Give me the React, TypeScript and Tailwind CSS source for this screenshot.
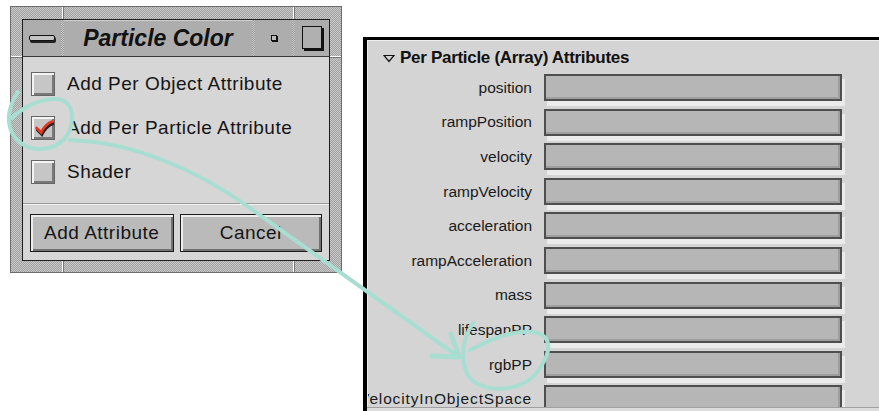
import React from "react";

const font = { fontFamily: '"Liberation Sans", Arial, sans-serif' };

const rows = [
  "position",
  "rampPosition",
  "velocity",
  "rampVelocity",
  "acceleration",
  "rampAcceleration",
  "mass",
  "lifespanPP",
  "rgbPP",
  "VelocityInObjectSpace",
];

function Dots({ className = "" }: { className?: string }) {
  return (
    <div
      className={
        "bg-[repeating-conic-gradient(#9c9c9c_0_25%,#c6c6c6_0_50%)] bg-[length:2px_2px] " +
        className
      }
    />
  );
}

function CheckBox({ checked }: { checked?: boolean }) {
  return (
    <div className="w-[24px] h-[24px] shrink-0 bg-[#c6c6c6] border border-[#666] shadow-[inset_2px_2px_0_#f4f4f4,inset_-2px_-2px_0_#7a7a7a] relative">
      {checked && (
        <svg viewBox="0 0 24 24" className="absolute inset-0 w-full h-full">
          <path d="M5 13 L10 18 C13 12 17 8 22 6" fill="none" stroke="#222" strokeWidth="3" strokeLinecap="round" transform="translate(0.8 1.2)" />
          <path d="M5 12 L10 17 C13 11 17 7 22 5" fill="none" stroke="#e5361f" strokeWidth="3" strokeLinecap="round" />
        </svg>
      )}
    </div>
  );
}

function WinButton({ children, w }: { children: React.ReactNode; w: string }) {
  return (
    <div
      className={
        "h-[38px] flex items-center justify-center border border-[#1c1c1c] bg-[#bababa] shadow-[inset_2px_2px_0_#ececec,inset_-2px_-2px_0_#727272] text-[19px] tracking-[0.5px] text-[#151515] " +
        w
      }
    >
      {children}
    </div>
  );
}

function ParticleWindow() {
  return (
    <div className="ml-[10px] mt-[6px] w-[332px] h-[267px] shrink-0 relative border border-[#6c6c6c] bg-[repeating-conic-gradient(#a2a2a2_0_25%,#c8c8c8_0_50%)] bg-[length:2px_2px] pt-[12px] px-[11px] pb-[11px]">
      {/* frame notches */}
      <div className="absolute top-0 left-[51px] w-[2px] h-[12px] border-l border-white border-r border-r-[#777]" />
      <div className="absolute top-0 left-[282px] w-[2px] h-[12px] border-l border-white border-r border-r-[#777]" />
      <div className="absolute bottom-0 left-[51px] w-[2px] h-[11px] border-l border-white border-r border-r-[#777]" />
      <div className="absolute bottom-0 left-[282px] w-[2px] h-[11px] border-l border-white border-r border-r-[#777]" />
      <div className="absolute left-0 top-[49px] h-[2px] w-[11px] border-t border-white border-b border-b-[#777]" />
      <div className="absolute right-0 top-[49px] h-[2px] w-[11px] border-t border-white border-b border-b-[#777]" />

      <div className="w-full h-full border border-[#1e1e1e] flex flex-col bg-[#d6d6d6]">
        {/* title bar */}
        <div className="h-[37px] flex shrink-0 border-b border-[#3a3a3a] bg-[#adadad]">
          <div className="w-[38px] flex items-center justify-center">
            <div className="w-[26px] h-[6px] bg-[#c4c4c4] border border-[#111] rounded-[2px] shadow-[1px_2px_0_#222]" />
          </div>
          <Dots className="w-[3px]" />
          <div className="w-[188px] flex items-center justify-center italic font-bold text-[23px] text-[#111] border-t border-[#d0d0d0]">
            Particle Color
          </div>
          <Dots className="w-[3px]" />
          <div className="w-[37px] flex items-center justify-center">
            <div className="w-[6px] h-[6px] bg-[#bdbdbd] border border-[#111] shadow-[1px_1px_0_#111]" />
          </div>
          <Dots className="w-[3px]" />
          <div className="flex-1 flex items-center justify-center">
            <div className="w-[20px] h-[23px] bg-[#b0b0b0] border border-[#111] shadow-[2px_2px_0_#111] -mt-[1px]" />
          </div>
        </div>

        {/* content */}
        <div className="flex flex-col px-[8px] pt-[5px] text-[19px] tracking-[0.5px] text-[#151515]">
          <div className="h-[44px] flex items-center gap-[12px]">
            <CheckBox />
            <span>Add Per Object Attribute</span>
          </div>
          <div className="h-[44px] flex items-center gap-[12px]">
            <CheckBox checked />
            <span>Add Per Particle Attribute</span>
          </div>
          <div className="h-[44px] flex items-center gap-[12px]">
            <CheckBox />
            <span>Shader</span>
          </div>
        </div>
        <div className="mt-[9px] h-[2px] border-t border-[#9a9a9a] border-b border-b-[#f2f2f2]" />
        <div className="flex gap-[6px] px-[7px] mt-[9px]">
          <WinButton w="w-[145px]">Add Attribute</WinButton>
          <WinButton w="w-[144px]">Cancel</WinButton>
        </div>
      </div>
    </div>
  );
}

function AttributePanel() {
  return (
    <div className="ml-[21px] mt-[37px] flex-1 h-[374px] border-l-4 border-t-[3px] border-black bg-[#d4d4d4] flex flex-col">
      <div className="h-[367px] overflow-hidden border-t border-l border-[#ededed] flex flex-col">
        <div className="h-[33px] shrink-0 flex items-center pl-[15px] gap-[5px] text-[17px] font-bold text-[#111] tracking-[-0.3px]">
          <svg width="12" height="9" viewBox="0 0 12 9" className="mt-[1px]">
            <path d="M1 1.5 H11 L6 7.5 Z" fill="none" stroke="#111" strokeWidth="1.2" />
          </svg>
          <span>Per Particle (Array) Attributes</span>
        </div>
        {rows.map((r, i) => (
          <div key={r} className="h-[34.6px] shrink-0 flex items-start">
            <div className="w-[164px] h-[27px] flex justify-end items-center overflow-hidden">
              <span
                className={
                  "shrink-0 whitespace-nowrap text-[15.5px] text-[#1a1a1a] " +
                  (i === rows.length - 1 ? "tracking-[0.85px]" : "")
                }
              >
                {r}
              </span>
            </div>
            <div className="ml-[12px] w-[298px] h-[27px] border-2 border-[#4e4e4e] bg-[#b6b6b6] shadow-[inset_-2px_-2px_0_#9e9e9e,3px_5px_0_#ebebeb]" />
          </div>
        ))}
      </div>
      <div className="flex-1 border-t border-[#a0a0a0] bg-[#dcdcdc]" />
    </div>
  );
}

function Annotation() {
  const c = "#a8ded2";
  return (
    <svg className="absolute inset-0 pointer-events-none" width="879" height="411" viewBox="0 0 879 411">
      <g fill="none" stroke={c} strokeWidth="4" strokeLinecap="round" strokeLinejoin="round">
        <path d="M18 92 C12 100 8 112 9 122 C11 140 26 150 42 149 C60 148 72 135 72 118 C72 104 64 98 52 99 C38 100 22 108 12 118" />
        <path d="M70 140 C130 142 195 168 250 208 L456 355" />
        <path d="M432 356 L459 357 L451 334" strokeWidth="5" />
        <path d="M473 323 C462 340 458 365 472 380 C488 394 525 392 540 368 C552 350 552 335 533 332 C510 330 490 340 470 350" />
      </g>
    </svg>
  );
}

export default function App() {
  return (
    <div className="w-[879px] h-[411px] bg-white relative overflow-hidden flex items-start" style={font}>
      <ParticleWindow />
      <AttributePanel />
      <Annotation />
    </div>
  );
}
